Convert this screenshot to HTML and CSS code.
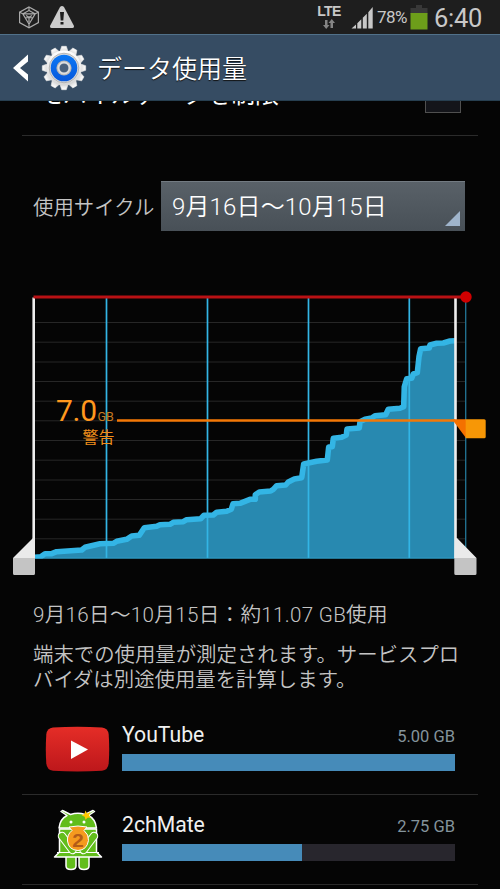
FILE: index.html
```html
<!DOCTYPE html>
<html lang="ja">
<head>
    <meta charset="UTF-8">
    <meta name="viewport" content="width=device-width, initial-scale=1.0">
    <title>データ使用量</title>
    <link rel="stylesheet" href="styles.css">
</head>
<body>
    <div class="status-bar">
        <svg class="status-left" width="60" height="34" viewBox="15 0 60 34">
            <g fill="none" stroke="#aaa" stroke-width="1.2">
                <path d="M29 7l9.4 5.2v10.4L29 27.8l-9.4-5.2V12.2z"/>
                <path d="M22.8 13.8h12.4L29 24.2zM26 15.5l3 1.8 3-1.8M29 17.3v5M19.6 12.2l3.2 1.6M38.4 12.2l-3.2 1.6M29 24.2v3.6M29 7v3.5l-6 3.3M29 10.5l6 3.3M25.2 18l3.8-.7 3.8.7"/>
            </g>
            <path d="M60 7q2-2 4 0l10 19q.3 2-1.5 2h-21q-1.800 0-1.500-2z" fill="#ccc"/>
            <path d="M60 12h4l-.7 8.500h-2.600zM60.500 22h3v2.500h-3z" fill="#1e1e1e"/>
        </svg>
        <div class="status-right">
            <div class="network">
                <span class="lte">LTE</span>
                <svg width="12" height="11" viewBox="0 0 12 11">
                    <path d="M2 1h2.500v5h2L3.200 10 0 6h2zM7.500 9H10V4h2L8.800 0 5.500 4h2z" fill="#858585"/>
                </svg>
            </div>
            <svg class="signal" width="23" height="23" viewBox="0 0 23 23">
                <path d="M0.500 22.500L5 18.500v4zM6.300 17.200l4-4v9.300h-4zM11.800 11.800l4-4v14.700h-4zM17.300 6.300l4.400-5.300v21.500h-4.400z" fill="#c8c8c8"/>
            </svg>
            <span class="percent">78%</span>
            <svg class="battery" width="18" height="25" viewBox="0 0 18 25">
                <path d="M6 0h6v3h5.500v6H.5V3H6z" fill="#383838"/>
                <path d="M.5 8h17v16.500H.5z" fill="#6d9e1a"/>
            </svg>
            <span class="clock">6:40</span>
        </div>
    </div>

    <div class="action-bar">
        <svg class="back" width="16" height="28" viewBox="0 0 16 28">
            <path d="M15 .5v7L7 14l8 6.500v7L0 14z" fill="#fff"/>
        </svg>
        <svg class="gear" width="46" height="46" viewBox="-23 -23 46 46">
            <defs>
                <linearGradient id="metal" x1="0" y1="0" x2="0" y2="1">
                    <stop offset="0" stop-color="#fff"/>
                    <stop offset="1" stop-color="#d5d5d5"/>
                </linearGradient>
                <linearGradient id="ring" x1="0" y1="0" x2="0" y2="1">
                    <stop offset="0" stop-color="#0b78f5"/>
                    <stop offset="1" stop-color="#0758dc"/>
                </linearGradient>
                <path id="tooth" d="M-4.200-16L-2.300-21.700h4.600L4.200-16z"/>
            </defs>
            <g fill="url(#metal)" stroke="#e6e6e6" stroke-width=".6">
                <use href="#tooth"/>
                <use href="#tooth" transform="rotate(30)"/>
                <use href="#tooth" transform="rotate(60)"/>
                <use href="#tooth" transform="rotate(90)"/>
                <use href="#tooth" transform="rotate(120)"/>
                <use href="#tooth" transform="rotate(150)"/>
                <use href="#tooth" transform="rotate(180)"/>
                <use href="#tooth" transform="rotate(210)"/>
                <use href="#tooth" transform="rotate(240)"/>
                <use href="#tooth" transform="rotate(270)"/>
                <use href="#tooth" transform="rotate(300)"/>
                <use href="#tooth" transform="rotate(330)"/>
            </g>
            <circle r="17.500" fill="url(#metal)"/>
            <circle r="14.800" fill="#ddd" stroke="#aaa" stroke-width=".8"/>
            <circle r="13.300" fill="url(#ring)"/>
            <circle r="7.600" fill="#b5b5b5"/>
            <circle r="5.500" fill="#5b7089" stroke="#ddd" stroke-width="2"/>
            <circle r="4" fill="#4a617c"/>
        </svg>
        <h1>データ使用量</h1>
    </div>

    <main class="content">
        <div class="limit-row">
            <span class="limit-label">モバイルデータを制限</span>
            <span class="checkbox"></span>
        </div>

        <div class="cycle-row">
            <span class="cycle-label">使用サイクル</span>
            <div class="spinner">
                <span>9月16日～10月15日</span>
                <svg class="corner" width="15" height="15" viewBox="0 0 15 15"><path d="M15 0v15H0z" fill="#9fb4cb"/></svg>
            </div>
        </div>

        <svg class="chart" width="500" height="310" viewBox="0 280 500 310">
            <!-- horizontal grid -->
            <path d="M35 322.500H465M35 342.200H465M35 362H465M35 381.500H465M35 401.200H465M35 420.800H465M35 440.500H465M35 460.200H465M35 480H465M35 499.500H465M35 519.200H465M35 538.800H465" stroke="#272727"/>
            <path d="M465.700 297V558" stroke="#237697" stroke-width="1.300"/>
            <!-- usage area -->
            <path d="M35 557.300L40.700 556.700 45 553.700 51.700 553.700 56.700 551.700 81.700 550 85 547.300 100 543.700 113.300 543.300 116.700 541.300 126.700 539.300 131.700 536 139.300 535.300 144.300 527.700 156.700 526.300 160 524.700 170 524.300 173.300 522.300 183.300 521.700 186.700 519.700 200.700 518.700 204 515.300 213.300 515 216.700 512.300 226.700 511.300 231.300 509.300 233 503.700 240 503.300 250 499.300 255.300 499.300 255.300 494.700 259.300 492 270.700 491 273.300 489.300 276.700 485.700 285.700 485 288.300 482 294.300 479 301.700 477.700 303.700 464 316.700 461.300 327.300 460 328.700 447 332.300 446.700 333.300 438.300 341.700 437.300 346.300 435 347 429 359.300 428 360 421.700 365 419.300 371.700 418 375 415.700 385.700 414.700 388.300 409.300 400 408.300 403.700 406.700 404.300 386.700 406.700 378.700 411.700 378.300 413.300 374 417.300 372.700 419 356.700 420.700 348.700 429.300 348 430 345 436.700 343.300 443.300 343 450 341 455 340.700V558H35z" fill="#2889b0"/>
            <path d="M106.500 298V558M207.500 298V558M308.500 298V558M409.300 298V558" stroke="#33b5e5" stroke-width="1.700"/>
            <path d="M35 558.200H465" stroke="#33a5d0"/>
            <clipPath id="plot"><path d="M34 297H456V558.500H34z"/></clipPath>
            <path clip-path="url(#plot)" d="M35 557.300L40.700 556.700 45 553.700 51.700 553.700 56.700 551.700 81.700 550 85 547.300 100 543.700 113.300 543.300 116.700 541.300 126.700 539.300 131.700 536 139.300 535.300 144.300 527.700 156.700 526.300 160 524.700 170 524.300 173.300 522.300 183.300 521.700 186.700 519.700 200.700 518.700 204 515.300 213.300 515 216.700 512.300 226.700 511.300 231.300 509.300 233 503.700 240 503.300 250 499.300 255.300 499.300 255.300 494.700 259.300 492 270.700 491 273.300 489.300 276.700 485.700 285.700 485 288.300 482 294.300 479 301.700 477.700 303.700 464 316.700 461.300 327.300 460 328.700 447 332.300 446.700 333.300 438.300 341.700 437.300 346.300 435 347 429 359.300 428 360 421.700 365 419.300 371.700 418 375 415.700 385.700 414.700 388.300 409.300 400 408.300 403.700 406.700 404.300 386.700 406.700 378.700 411.700 378.300 413.300 374 417.300 372.700 419 356.700 420.700 348.700 429.300 348 430 345 436.700 343.300 443.300 343 450 341 455 340.700" fill="none" stroke="#33b5e5" stroke-width="5.600" stroke-linejoin="round"/>
            <!-- range handles -->
            <path d="M33.700 297.500V558M455.500 297.500V558" stroke="#eee" stroke-width="2.600"/>
            <path d="M13 558L33 538h2v20zM455 538h2l19.500 20H454.500z" fill="#eaeaea"/>
            <path d="M13 558h22v15.500q0 1.500-1.500 1.500h-19q-1.500 0-1.500-1.500zM454.300 558h22.200v15.500q0 1.500-1.500 1.500h-19.200q-1.500 0-1.500-1.500z" fill="#c4c4c4"/>
            <!-- limit and warning -->
            <path d="M33.500 297H466" stroke="#b91114" stroke-width="3"/>
            <circle cx="466" cy="297" r="5.700" fill="#d00000"/>
            <path d="M117 420.500H455" stroke="#f47806" stroke-width="2.700"/>
            <path d="M452 419.300h14V438z" fill="#f47100"/>
            <path d="M465.700 419.300h18.500q1.500 0 1.500 1.500v16q0 1.500-1.500 1.500h-18.500z" fill="#f79706"/>
            <text class="warn-value" x="56" y="421" textLength="41">7.0</text>
            <text class="warn-unit" x="97.500" y="421">GB</text>
            <text class="warn-label" x="82.500" y="443">警告</text>
        </svg>

        <p class="total">9月16日～10月15日：約11.07 GB使用</p>
        <p class="note">端末での使用量が測定されます。サービスプロ<br>バイダは別途使用量を計算します。</p>

        <div class="app">
            <svg class="app-icon" width="68" height="64" viewBox="43 717 68 64">
                <defs>
                    <linearGradient id="red" x1="0" y1="0" x2="0" y2="1">
                        <stop offset="0" stop-color="#e52d27"/>
                        <stop offset="1" stop-color="#bd171b"/>
                    </linearGradient>
                </defs>
                <path d="M53 727.500q24.500-1.500 49 0 6 .5 6.700 7 1 15 0 29-.7 6.500-6.700 7.200-24.500 1.500-49 0-6-.7-6.700-7.200-1-14 0-29 .7-6.500 6.700-7z" fill="url(#red)"/>
                <path d="M71 740.500l17 9-17 9.500z" fill="#fff"/>
            </svg>
            <div class="app-info">
                <div class="app-head"><span class="name">YouTube</span><span class="size">5.00 GB</span></div>
                <div class="bar"><div class="fill" style="width: 100%"></div></div>
            </div>
        </div>

        <div class="app">
            <svg class="app-icon" width="68" height="64" viewBox="43 807 68 64">
                <g fill="#62bd1b" stroke="#fff" stroke-width="1.500" stroke-linejoin="round">
                    <path d="M66 855h10v11q0 3.500-5 3.500t-5-3.500zM79 855h10v11q0 3.500-5 3.500t-5-3.500z"/>
                    <path d="M59.500 829h37v23l5 5H54.500l5-5z"/>
                    <path d="M59 828q1-9 8-12.500l-6-4 1.500-1 8 4q7.500-2.500 14.500 0l8-4 1.500 1-6 4q7 3.500 8 12.500z"/>
                </g>
                <path d="M57 852.500h42" stroke="#fff"/>
                <path d="M62 836L72.500 850M94 836L83.500 850" stroke="#fff" stroke-width="8.500" stroke-linecap="round"/>
                <path d="M62 836L72.500 850M94 836L83.500 850" stroke="#62bd1b" stroke-width="6.300" stroke-linecap="round"/>
                <path d="M69 827q9-2 18 0l-3 3.500q5 4 4.500 10-1.500 9.500-10.500 10-9.500-.5-10.500-9.500-.5-6.500 4.500-10.500z" fill="#f59a1e" stroke="#fff"/>
                <circle cx="71" cy="822" r="1.500" fill="#fff"/>
                <circle cx="84" cy="822" r="1.500" fill="#fff"/>
                <path d="M85.500 810.500l1.500 3 3.300-1.500-1.300 3.300 1.800 2.200-3.300.2-2 2-.8-3-3-1.200 2.700-1.500z" fill="#ffc800"/>
                <text class="coin" x="72.300" y="846.500" textLength="11.500" lengthAdjust="spacingAndGlyphs">2</text>
            </svg>
            <div class="app-info">
                <div class="app-head"><span class="name">2chMate</span><span class="size">2.75 GB</span></div>
                <div class="bar"><div class="fill" style="width: 54%"></div></div>
            </div>
        </div>
    </main>
</body>
</html>
```
FILE: styles.css
```css
* { margin: 0; padding: 0; box-sizing: border-box; }
body {
    font-family: Roboto, "Noto Sans CJK JP", sans-serif;
    font-weight: 350;
    background: #050505; color: #c4c4c4;
    width: 500px; height: 889px; overflow: hidden;
}
svg { display: block; flex-shrink: 0; }

.status-bar {
    height: 34px; padding: 0 18px 0 15px;
    display: flex; justify-content: space-between;
    background: #1e1e1e; color: #c8c8c8;
}
.status-right { display: flex; align-items: flex-start; }
.network {
    width: 24px; margin-right: 10px; padding-top: 4px;
    display: flex; flex-direction: column; align-items: center;
}
.lte { font: bold 14px/15px "Liberation Sans", sans-serif; letter-spacing: -0.6px; }
.signal { margin-top: 6px; }
.percent { margin-left: 3px; font-size: 17px; line-height: 35px; font-weight: 400; width: 33px; letter-spacing: -0.6px; }
.battery { margin-top: 5px; }
.clock { margin-left: 6px; width: 48px; font-size: 25.5px; line-height: 36px; font-weight: 400; letter-spacing: -0.3px; }

.action-bar {
    height: 67px; padding-left: 13px;
    display: flex; align-items: center;
    background: #364c63;
    border-top: 1px solid #51718a; border-bottom: 1px solid #273f50;
}
.gear { margin-left: 12px; }
h1 {
    margin-left: 10px; padding-top: 4px; font-size: 25px; line-height: 36px; font-weight: 350;
    color: #fff; text-shadow: 0 1px 1px #111;
}

.content { height: 788px; overflow: hidden; }
.limit-row {
    height: 35px; margin: 0 22px; padding: 0 17px;
    display: flex; justify-content: space-between;
    border-bottom: 1px solid #2b2b2b;
    font-size: 24px; line-height: 36px; font-weight: 400; color: #fff;
}
.limit-label { margin-top: -24px; }
.checkbox {
    width: 36px; height: 36px; margin-top: -24px;
    background: #14151a; border: 1px solid #505050;
}

.cycle-row {
    margin: 44px 35px 0 33px; height: 51px;
    display: flex; align-items: center;
}
.cycle-label { width: 128px; font-size: 20.4px; white-space: nowrap; }
.spinner {
    flex: 1; height: 50px; padding: 0 5px 5px 11px;
    display: flex; justify-content: space-between; align-items: flex-end;
    background: linear-gradient(#596168, #485057);
    border-top: 1px solid #737b82;
    font-size: 24px; line-height: 38px; letter-spacing: 0.15px; color: #fff; white-space: nowrap;
}

.chart { margin-top: 49px; }
.warn-value { font-size: 30px; font-weight: 400; fill: #ff981e; }
.warn-unit { font-size: 12.5px; font-weight: 400; fill: #c77a20; }
.warn-label { font-size: 16px; font-weight: 400; fill: #ef8d1b; }
.coin { font: bold 18px "Liberation Sans", sans-serif; fill: #b35c18; }

.total { margin: 10px 0 0 33px; font-size: 20.6px; line-height: 30px; letter-spacing: 0.3px; white-space: nowrap; }
.note { margin: 13px 0 0 33px; font-size: 20.4px; line-height: 25px; white-space: nowrap; }

.app {
    height: 90px; margin: 0 22px; padding: 0 23px 2px 21px;
    display: flex; align-items: center;
    border-bottom: 1px solid #2b2b2b;
}
.note + .app { margin-top: 12px; }
.app-info { flex: 1; margin: 0 0 6px 11px; }
.app-head { display: flex; justify-content: space-between; align-items: baseline; line-height: 28px; margin-bottom: 3px; }
.name { font-size: 21.2px; font-weight: 400; color: #f0f0f0; }
.size { font-size: 16.5px; font-weight: 400; color: #84949c; }
.bar { height: 17px; background: #28262d; }
.fill { height: 100%; background: #468bb9; }
```
